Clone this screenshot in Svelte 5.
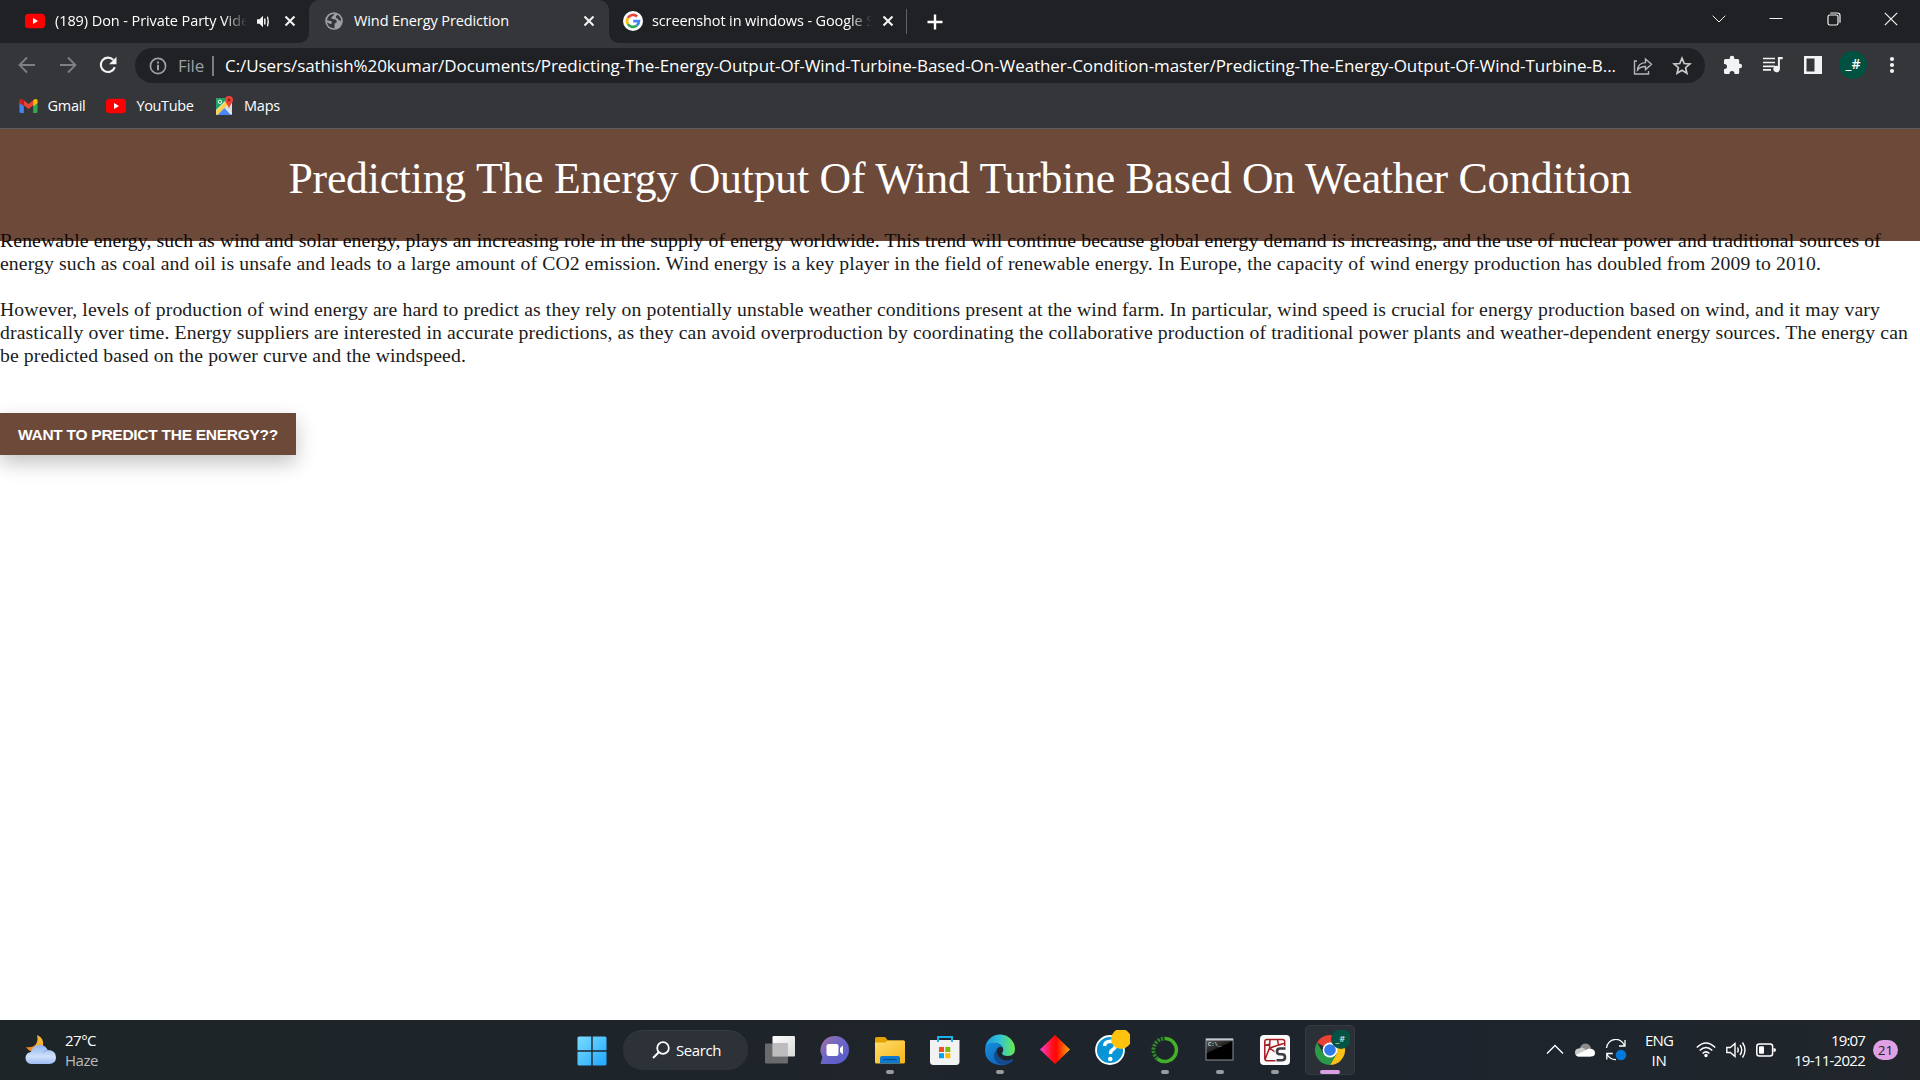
<script>
  // Spreads the letters of a label so that it takes up exactly the given width.
  function fit(node, width) {
    const count = node.textContent.length;
    const natural = node.getBoundingClientRect().width;
    node.style.letterSpacing = `${(width - natural) / count}px`;
  }

  const apps = ['taskview', 'chat', 'folder', 'store', 'edge', 'diamond', 'help', 'ring', 'cmd', 'spyder', 'chrome'];
  const running = ['folder', 'edge', 'ring', 'cmd', 'spyder'];
</script>

{#snippet youtube()}
  <svg width="20" height="20" viewBox="0 0 20 20"><rect x="0" y="2.7" width="20" height="14.6" rx="3.6" fill="#f00" /><path d="M8 7l5 3-5 3z" fill="#fff" /></svg>
{/snippet}

{#snippet cross()}
  <svg class="cross" width="12" height="12" viewBox="0 0 12 12"><path d="M1.5 1.5l9 9M10.500 1.500l-9 9" stroke="#f1f3f4" stroke-width="2.100" /></svg>
{/snippet}

<div class="screen">
  <div class="tabs">
    <div class="tab first">
      {@render youtube()}
      <div class="label faded l1"><span use:fit={194}>(189) Don - Private Party Vide</span></div>
      <svg class="audio" width="13" height="13" viewBox="0 0 13 13"><path d="M0 4.200h2.500L6 .8v11.400L2.500 8.800H0z" fill="#f1f3f4" /><path d="M7.800 3.500v6" stroke="#f1f3f4" stroke-width="1.500" /><path d="M10.500 1.600q1.500 4.900 0 9.800" fill="none" stroke="#f1f3f4" stroke-width="1.300" /></svg>
      {@render cross()}
    </div>
    <div class="tab active">
      <svg width="18" height="18" viewBox="0 0 18 18"><circle cx="9" cy="9" r="8.800" fill="#9aa0a6" /><path d="M9.200 1.800Q8.800 3.900 7.300 4.600 5.800 5.400 6.600 6.600 7.200 7.300 9.500 7.200 11.600 7.600 11.800 9.500 11.700 11 9.700 11.400 9.300 13.300 9.700 16.200Q3.200 16.400 1.900 10.300L5.300 11.900Q6.900 12.100 6.900 10.300 6.600 8.900 4.600 8.800L2 8.200Q2.700 2.600 9.200 1.800ZM12.300 2.700Q16 4.700 16.200 8.500 14.300 9 13.300 7.600 12.800 6.300 11 6 10.200 4.500 12.300 2.700z" fill="#35363a" /></svg>
      <div class="label l2"><span use:fit={155}>Wind Energy Prediction</span></div>
      {@render cross()}
    </div>
    <div class="tab third">
      <svg width="20" height="20" viewBox="0 0 20 20"><circle cx="10" cy="10" r="10" fill="#fff" /><g fill="none" stroke-width="2.700"><path d="M4.900 6.900A6 6 0 0 1 14.100 5.500" stroke="#ea4335" /><path d="M4.900 6.900A6 6 0 0 0 4.900 13.100" stroke="#fbbc05" /><path d="M4.900 13.100A6 6 0 0 0 13.900 14.500" stroke="#34a853" /><path d="M13.900 14.500Q16 12.700 16 10.100H10.200" stroke="#4285f4" /></g></svg>
      <div class="label faded l3"><span use:fit={222}>screenshot in windows - Google S</span></div>
      {@render cross()}
    </div>
    <div class="tabline"></div>
    <svg class="plus" width="16" height="16" viewBox="0 0 16 16"><path d="M8 .500v15M.500 8h15" stroke="#fff" stroke-width="2.400" /></svg>
    <div class="winctl">
      <svg width="14" height="14" viewBox="0 0 14 14"><path d="M.7 3.700L7 10l6.300-6.300" stroke-width="1" /></svg>
      <svg width="14" height="14" viewBox="0 0 14 14"><path d="M.500 6.500h13" stroke-width="1" /></svg>
      <svg width="14" height="14" viewBox="0 0 14 14"><rect x="1" y="3" width="10" height="10" rx="1.800" /><path d="M3.300 1h7a2.700 2.700 0 0 1 2.700 2.700v7" /></svg>
      <svg width="14" height="14" viewBox="0 0 14 14"><path d="M.800.800l12.400 12.400M13.200.800L.800 13.200" /></svg>
    </div>
  </div>

  <div class="toolbar">
    <div class="nav">
      <svg width="20" height="20" viewBox="0 0 20 20"><path d="M18 10H3M10 2.500L2.500 10l7.500 7.500" fill="none" stroke="#7d8084" stroke-width="1.800" /></svg>
      <svg width="20" height="20" viewBox="0 0 20 20"><path d="M2 10h15M10 2.500l7.500 7.500-7.500 7.500" fill="none" stroke="#7d8084" stroke-width="1.800" /></svg>
      <svg width="20" height="20" viewBox="0 0 20 20"><path d="M15.300 4.900A7.200 7.200 0 1 0 16.800 12.200" fill="none" stroke="#f1f3f4" stroke-width="2.100" /><path d="M18.500 1.800v7.500H11z" fill="#f1f3f4" /></svg>
    </div>
    <div class="omnibox">
      <svg width="18" height="18" viewBox="0 0 18 18"><circle cx="9" cy="9" r="7.600" fill="none" stroke="#9aa0a6" stroke-width="1.700" /><path d="M9 7.800v5.400M9 4.600v1.900" stroke="#9aa0a6" stroke-width="2" /></svg>
      <div class="file"><span use:fit={26}>File</span></div>
      <i></i>
      <div class="url"><span use:fit={1391}>C:/Users/sathish%20kumar/Documents/Predicting-The-Energy-Output-Of-Wind-Turbine-Based-On-Weather-Condition-master/Predicting-The-Energy-Output-Of-Wind-Turbine-B...</span></div>
      <svg width="20" height="20" viewBox="0 0 20 20"><path d="M4 5H1.500v13h14v-3M4.500 14Q5 7 12.500 6.600V3L18.500 8.300 12.500 13.600V10.500Q7.500 10.400 4.500 14z" fill="none" stroke="#b4b7ba" stroke-width="1.400" /></svg>
      <svg class="star" width="20" height="20" viewBox="0 0 20 20"><path d="M10 2.200l2.200 5.300 5.700.5-4.300 3.700 1.300 5.600L10 14.300l-4.900 3 1.300-5.600L2.100 8l5.700-.5z" fill="none" stroke="#c8cacc" stroke-width="1.700" /></svg>
    </div>
    <div class="tools">
      <svg width="20" height="20" viewBox="0 0 20 20"><path d="M1 5.500Q1 4 2.500 4H6.700V3a2.300 2.300 0 0 1 4.600 0v1h3.400q1.500 0 1.500 1.500v3.200h.6a2.300 2.300 0 0 1 0 4.600h-.6v4.200q0 1.500-1.500 1.500h-3.200v-.6a2.500 2.500 0 0 0-5 0v.6H2.500Q1 19 1 17.500v-3.400h.5a2.500 2.500 0 0 0 0-5H1z" fill="#f1f3f4" /></svg>
      <svg width="20" height="20" viewBox="0 0 20 20"><path d="M0 3.500h12M0 7.500h12M0 11.300h12M0 14.800h8" stroke="#f1f3f4" stroke-width="1.700" /><path d="M14.900 2h4.800v2.300H16.900V14a3.300 3.300 0 1 1-2-3z" fill="#f1f3f4" /></svg>
      <svg width="20" height="20" viewBox="0 0 20 20"><path d="M1 1h18v18H1zM3.500 3.500v13h8v-13z" fill="#f1f3f4" fill-rule="evenodd" /></svg>
      <div class="avatar">_#</div>
      <svg width="20" height="20" viewBox="0 0 20 20"><circle cx="10" cy="4" r="2.100" fill="#f1f3f4" /><circle cx="10" cy="10" r="2.100" fill="#f1f3f4" /><circle cx="10" cy="16" r="2.100" fill="#f1f3f4" /></svg>
    </div>
  </div>

  <div class="bookmarks">
    <div class="mark m1">
      <svg width="19" height="16" viewBox="0 0 19 16"><path d="M.500 3v10.500q0 1.500 1.500 1.500h2.800V6.500z" fill="#4285f4" /><path d="M18.500 3v10.500q0 1.500-1.500 1.500h-2.800V6.500z" fill="#34a853" /><path d="M4.800 2.200l4.700 3.700 4.700-3.700v5L9.500 10.900 4.800 7.200z" fill="#ea4335" /><path d="M14.200 2.200Q17-.2 18.500 2v3l-4.300 3.200z" fill="#fbbc04" /><path d="M4.800 2.200Q2-.2.500 2v3l4.300 3.200z" fill="#c5221f" /></svg>
      <span use:fit={38}>Gmail</span>
    </div>
    <div class="mark m2">{@render youtube()}<span use:fit={57}>YouTube</span></div>
    <div class="mark m3">
      <svg width="19" height="22" viewBox="0 0 19 22"><rect x="1" y="3" width="16" height="17" rx="1.500" fill="#e8eaed" /><path d="M1 4.500Q1 3 2.500 3H13L1 15z" fill="#1ea362" /><path d="M1 16L14 3l3 3L2.500 20Q1 20 1 18.500z" fill="#fbd24c" /><path d="M2.500 20l7-7 6.500 7z" fill="#4a89f3" /><path d="M10 12.500L14 9l3 3v6z" fill="#dadce0" /><path d="M14 1a4 4 0 0 1 4 4q0 2.500-2.200 4.800Q14.500 11.300 14 13.500 13.500 11.300 12.200 9.800 10 7.500 10 5a4 4 0 0 1 4-4z" fill="#ea4335" /><circle cx="14" cy="5" r="1.400" fill="#8c1f17" /><circle cx="4.900" cy="6.800" r="1.700" fill="none" stroke="#fff" /></svg>
      <span use:fit={36}>Maps</span>
    </div>
  </div>

  <main>
    <header><h1><span use:fit={1343}>Predicting The Energy Output Of Wind Turbine Based On Weather Condition</span></h1></header>
    <section>
      <p>
        <span use:fit={1881}>Renewable energy, such as wind and solar energy, plays an increasing role in the supply of energy worldwide. This trend will continue because global energy demand is increasing, and the use of nuclear power and traditional sources of</span>
        <span use:fit={1821}>energy such as coal and oil is unsafe and leads to a large amount of CO2 emission. Wind energy is a key player in the field of renewable energy. In Europe, the capacity of wind energy production has doubled from 2009 to 2010.</span>
      </p>
      <p>
        <span use:fit={1880}>However, levels of production of wind energy are hard to predict as they rely on potentially unstable weather conditions present at the wind farm. In particular, wind speed is crucial for energy production based on wind, and it may vary</span>
        <span use:fit={1908}>drastically over time. Energy suppliers are interested in accurate predictions, as they can avoid overproduction by coordinating the collaborative production of traditional power plants and weather-dependent energy sources. The energy can</span>
        <span use:fit={466}>be predicted based on the power curve and the windspeed.</span>
      </p>
    </section>
    <button><span use:fit={260}>WANT TO PREDICT THE ENERGY??</span></button>
  </main>

  <div class="taskbar">
    <div class="weather">
      <svg width="32" height="32" viewBox="0 0 32 32">
        <defs><linearGradient id="moon" x1="0" y1="1" x2="1" y2="0"><stop offset="0" stop-color="#f07a1a" /><stop offset="1" stop-color="#f8c93a" /></linearGradient><linearGradient id="cloud" x1="0" y1="0" x2="0" y2="1"><stop offset="0" stop-color="#8fb3ee" /><stop offset=".6" stop-color="#cfe0fb" /><stop offset="1" stop-color="#9dbdf2" /></linearGradient></defs>
        <path d="M12 1Q19 4 18 11 17 17 10 18 4 18 1 13q7 1 10-3 2.500-4 1-9z" fill="url(#moon)" />
        <path d="M6 30a5.500 6 0 0 1 0-12Q8 11 15 11q5.500 0 7.500 5Q31 16 31 23.500 31 30 24 30z" fill="url(#cloud)" />
        <path d="M18 19q2-3 5-3" fill="none" stroke="#7ca5e8" />
      </svg>
      <div class="stack"><span use:fit={31}>27°C</span><span class="dim" use:fit={33}>Haze</span></div>
    </div>

    <div class="center">
      <svg class="start" width="30" height="30" viewBox="0 0 30 30"><defs><linearGradient id="win" x1="0" y1="0" x2="1" y2="1" gradientUnits="objectBoundingBox"><stop offset="0" stop-color="#7bdcff" /><stop offset="1" stop-color="#1fa7ff" /></linearGradient></defs><path d="M2 .500h12.300v13.800H.500V2Q.500.500 2 .500zM15.700.500H28q1.500 0 1.500 1.500v12.300H15.700zM.500 15.700h13.800v13.800H2Q.500 29.500.500 28zM15.700 15.700h13.800V28q0 1.500-1.500 1.500H15.700z" fill="url(#win)" /></svg>
      <div class="search">
        <svg width="18" height="18" viewBox="0 0 18 18"><circle cx="11" cy="7" r="5.800" fill="none" stroke="#fff" stroke-width="1.800" /><path d="M6.800 11.200L1 17" stroke="#fff" stroke-width="2" /></svg>
        <span use:fit={45}>Search</span>
      </div>
      <div class="apps">
        {#each apps as app}
          <div class="app" class:current={app === 'chrome'}>
            <svg width="40" height="40" viewBox="0 0 40 40">
              {#if app === 'taskview'}
                <defs><linearGradient id="tv" x1="0" y1="0" x2="1" y2="1"><stop offset="0" stop-color="#fff" /><stop offset="1" stop-color="#d8d8d8" /></linearGradient></defs>
                <rect x="12.500" y="6" width="22.500" height="20.500" rx="1.200" fill="url(#tv)" /><rect x="5" y="13.500" width="23" height="20" rx="1.200" fill="#777" fill-opacity=".85" /><rect x="12.500" y="13.500" width="15.500" height="13" fill="#bdbdbd" />
              {:else if app === 'chat'}
                <defs><linearGradient id="ch" x1="0" y1="0" x2="1" y2="1"><stop offset="0" stop-color="#a5709f" /><stop offset=".45" stop-color="#6e68c4" /><stop offset="1" stop-color="#5356cf" /></linearGradient></defs>
                <path d="M20 6a14 14 0 0 1 0 28H5.500L7.400 27A14 14 0 0 1 20 6z" fill="url(#ch)" /><rect x="11.500" y="14" width="12" height="12" rx="2.200" fill="#fff" /><path d="M25 18l3-2.500v9L25 22z" fill="#fff" />
              {:else if app === 'folder'}
                <defs><linearGradient id="fo" x1="0" y1="0" x2="1" y2="1"><stop offset="0" stop-color="#ffdd6a" /><stop offset="1" stop-color="#f6b51a" /></linearGradient></defs>
                <path d="M5 8.500Q5 7 6.500 7H15l3 3.500h15.500Q35 10.500 35 12v6H5z" fill="#e5a100" /><path d="M5 12.500h10l3-2h15.500q1.500 0 1.500 1.500V32q0 1.500-1.500 1.500h-27Q5 33.500 5 32z" fill="url(#fo)" /><path d="M10 33.500V28q0-2 2-2h16q2 0 2 2v5.500z" fill="#0f78cf" /><path d="M13.500 29.500h13" stroke="#064e93" stroke-width="1.200" />
              {:else if app === 'store'}
                <path d="M5 10h29.500v21.500Q34.500 35 31 35H8.500Q5 35 5 31.500z" fill="#f2f2f2" /><path d="M13 12V7h14v5" fill="none" stroke="#1ab0f0" stroke-width="2" /><path d="M14 17h5v5h-5z" fill="#f25022" /><path d="M20.300 17h5v5h-5z" fill="#7fba00" /><path d="M14 23.200h5v5h-5z" fill="#00a4ef" /><path d="M20.300 23.200h5v5h-5z" fill="#ffb900" />
              {:else if app === 'edge'}
                <defs><linearGradient id="e1"><stop offset="0" stop-color="#2296e3" /><stop offset=".5" stop-color="#32c4d2" /><stop offset="1" stop-color="#6bea50" /></linearGradient><linearGradient id="e2" x1="0" y1="0" x2="1" y2="1"><stop offset="0" stop-color="#1590df" /><stop offset="1" stop-color="#0b55ad" /></linearGradient></defs>
                <path d="M5.200 17A15 15 0 0 1 35 19Q35 25.500 28 26 22 26 22 23q2-2 1-5-3-6-10-4.500Q8 14 5.200 17z" fill="url(#e1)" /><path d="M5 20Q5 13 13 12.800 21 13 23.300 18 20 15.500 17.300 18.500 14 24 18.500 29 24 33.500 31 30.300 34 29 32.500 31 27.500 36 19 35 5 32.500 5 20z" fill="url(#e2)" /><path d="M16.300 20Q12 25 15.500 30.500 18.500 34.700 23.500 34.800 29.500 34 33 30q.5-1.500-1-.8-7 3.500-12.500-1.700-3-3.500-3.200-7.500z" fill="#134b8e" />
              {:else if app === 'diamond'}
                <defs><linearGradient id="di"><stop offset="0" stop-color="#ff3fd5" /><stop offset=".4" stop-color="#ff1020" /><stop offset=".55" stop-color="#ff0800" /><stop offset="1" stop-color="#ffad10" /></linearGradient></defs><path d="M20 5l15 14.500L20 34 5 19.500z" fill="url(#di)" />
              {:else if app === 'help'}
                <circle cx="20" cy="20" r="14" fill="#0895d8" stroke="#fff" stroke-width="1.800" /><path d="M14.500 16q.5-4.800 6-4.800 5 .3 5 4.300 0 2.500-3 4.200-2 1.300-2 4.300" fill="none" stroke="#fff" stroke-width="3.400" /><circle cx="20.300" cy="29" r="2.300" fill="#fff" /><circle cx="31" cy="9" r="10" fill="#ffc20e" />
              {:else if app === 'ring'}
                <path d="M20 8.500a11.500 11.500 0 1 1-7.500 20.300" fill="none" stroke="#43b02a" stroke-width="3.600" /><path d="M12.500 28.800A11.500 11.500 0 0 1 20 8.500" fill="none" stroke="#2f8a27" stroke-width="3.800" stroke-dasharray="2.200 1.200" />
              {:else if app === 'cmd'}
                <defs><linearGradient id="cm" x1="0" y1="0" x2=".6" y2="1"><stop offset="0" stop-color="#5a5a5a" /><stop offset=".5" stop-color="#222" /><stop offset=".52" stop-color="#000" /></linearGradient></defs>
                <rect x="6" y="9" width="27" height="21" fill="url(#cm)" stroke="#8a9099" /><path d="M6 9.500h27" stroke="#c4c9d0" stroke-width="2" /><text x="8" y="16.200" font-size="5.500" font-family="Liberation Mono" fill="#fff">C:\_</text>
              {:else if app === 'spyder'}
                <rect x="5" y="5" width="30" height="30" rx="4" fill="#fafafa" /><path d="M20.500 30.800H12q-2.200 0-2.200-2.200V11.700q0-2.200 2.200-2.200h15.500q2.200 0 2.200 2.200V17M15 9.500l-.5 8.500L9.800 30M14.500 18L30 13M14.500 18l7 5M10 15.500l5-1.500M22.500 9.700l1 5.500" fill="none" stroke="#a71c22" stroke-width="1.500" /><path d="M30.500 18.500H25q-3 0-3 3 0 2.800 3 2.800h2q3 0 3 3 0 3-3 3h-5.500" fill="none" stroke="#fafafa" stroke-width="5" /><path d="M30.500 18.500H25q-3 0-3 3 0 2.800 3 2.800h2q3 0 3 3 0 3-3 3h-5.500" fill="none" stroke="#3c3d40" stroke-width="2.600" />
              {:else}
                <path d="M20 20L7 12.500A15 15 0 0 1 33 12.500H20z" fill="#ea4335" /><path d="M20 12.500h13A15 15 0 0 1 20 35l6.500-11.300z" fill="#fbc116" /><path d="M7 12.500A15 15 0 0 0 20 35l6.500-11.300L13.500 23.800z" fill="#2b9a48" /><circle cx="20" cy="20" r="7.400" fill="#fff" /><circle cx="20" cy="20" r="5.800" fill="#3079ed" /><circle cx="31" cy="9" r="10" fill="#045344" /><text x="25.500" y="12" font-size="9" font-family="Open Sans" font-weight="600" fill="#d5e4e0">_#</text>
              {/if}
            </svg>
            {#if running.includes(app) || app === 'chrome'}<b></b>{/if}
          </div>
        {/each}
      </div>
    </div>

    <div class="tray">
      <svg width="20" height="20" viewBox="0 0 20 20"><path d="M2 13.500l8-8 8 8" fill="none" stroke="#fff" stroke-width="1.400" /></svg>
      <svg width="20" height="20" viewBox="0 0 20 20"><path d="M4.500 9Q6 3.500 10.500 3.500q4 0 5.500 4.500L10 13z" fill="#8c8c8c" /><path d="M4 16.500a4 4 0 0 1 0-8q3-1.500 6 .5l6 7.500z" fill="#c9c9c9" /><path d="M1 15l10-5q3-2.500 6-1 3 1 3 4 0 3.500-4 3.500H4Q2 16.500 1 15z" fill="#fff" /></svg>
      <svg width="22" height="22" viewBox="0 0 22 22"><path d="M1.500 9A9.300 9.300 0 0 1 19.500 6.500M20 1v6h-6M1.800 20.500v-6h6M2 15.500q3.500 5.500 9 5" fill="none" stroke="#fff" stroke-width="1.300" /><circle cx="16" cy="16" r="5.300" fill="#0078d9" /></svg>
      <div class="stack lang"><span use:fit={28}>ENG</span><span use:fit={15}>IN</span></div>
      <svg width="20" height="20" viewBox="0 0 20 20"><g fill="none" stroke="#fff" stroke-width="1.500"><path d="M.8 7.500Q10-1.500 19.200 7.500M3.700 10.500q6.300-6 12.600 0M6.600 13.500q3.400-3.300 6.800 0" /></g><circle cx="10" cy="15.500" r="1.700" fill="#fff" /></svg>
      <svg width="20" height="20" viewBox="0 0 20 20"><g fill="none" stroke="#fff" stroke-width="1.400"><path d="M.8 7.500h3.500L9 3.500v13l-4.700-4H.8z" /><path d="M11.500 7.500q1.500 2.500 0 5M14 5q3.500 5 0 10M16.500 2.500q5 7.500 0 15" /></g></svg>
      <svg width="20" height="20" viewBox="0 0 20 20"><rect x=".8" y="4" width="15.800" height="12" rx="2.500" fill="none" stroke="#fff" stroke-width="1.500" /><rect x="3" y="6.200" width="5" height="7.600" rx="1" fill="#fff" /><path d="M17.500 8q2.500 0 2.500 2t-2.500 2z" fill="#fff" /></svg>
      <div class="stack clock"><span use:fit={34}>19:07</span><span use:fit={71}>19-11-2022</span></div>
      <div class="badge">21</div>
    </div>
  </div>
</div>

<style>
  :global(body) { margin: 0; overflow: hidden; background: #fff; }
  svg { display: block; flex: none; }
  span { white-space: pre; flex: none; }
  .screen { width: 1920px; height: 1080px; display: flex; flex-direction: column; font: 14.5px/20px "Open Sans", "Noto Sans", sans-serif; color: #fff; overflow: hidden; }

  .tabs { height: 43px; flex: none; display: flex; align-items: center; background: linear-gradient(#202124, #202124) 0 0 / 100% 22px no-repeat, linear-gradient(#202124, #202124) 620px 0 / 100% 43px no-repeat, #35363a; }
  .tab { height: 43px; display: flex; align-items: center; box-sizing: border-box; flex: none; padding-bottom: 1px; }
  .first { width: 309px; padding-left: 25px; border-radius: 0 0 10px 0; background: #202124; }
  .active { width: 300px; padding-left: 16px; background: #35363a; border-radius: 10px 10px 0 0; }
  .third { width: 297px; padding-left: 14px; border-radius: 0 0 0 10px; background: #202124; }
  .label { display: flex; flex: none; }
  .l1 { width: 193px; margin-left: 10px; }
  .l2 { width: 229px; margin-left: 11px; }
  .l3 { width: 221px; margin-left: 9px; }
  .faded { mask-image: linear-gradient(90deg, #000 calc(100% - 24px), transparent calc(100% - 1px)); }
  .audio { margin: 0 14px 0 9px; }
  .third .cross { margin-left: 9px; }
  .tabline { width: 1px; height: 25px; background: #5f6368; }
  .plus { margin-left: 20px; }
  .winctl { display: flex; gap: 43.300px; margin: -5px 22px 0 auto; fill: none; stroke: #f2f2f2; stroke-width: 1.200; }

  .toolbar { height: 44px; flex: none; background: #35363a; display: flex; align-items: center; }
  .nav { display: flex; gap: 20.500px; margin-left: 17px; width: 118px; }
  .omnibox { width: 1570px; height: 35px; margin-top: 1px; border-radius: 18px; background: #202124; display: flex; align-items: center; box-sizing: border-box; padding-left: 13.500px; font-size: 17px; line-height: 24px; flex: none; }
  .file { width: 33.500px; margin-left: 11.500px; color: #9aa0a6; display: flex; }
  .omnibox i { width: 2px; height: 20px; background: #7b7e82; }
  .url { width: 1407.500px; margin-left: 11.500px; display: flex; flex: none; }
  .star { margin-left: 19.500px; }
  .tools { display: flex; align-items: center; margin-left: 18px; gap: 20px; }
  .avatar { width: 28px; height: 28px; border-radius: 50%; background: #00513f; margin: 0 -4px; text-align: center; font-size: 14px; line-height: 26px; font-weight: 600; }
  .tools > :last-child { margin-left: -1px; }

  .bookmarks { height: 42px; flex: none; background: #35363a; border-bottom: 1px solid #5b5e62; display: flex; align-items: center; box-sizing: border-box; padding-bottom: 3px; }
  .mark { display: flex; align-items: center; flex: none; }
  .m1 { margin-left: 18.500px; gap: 10px; width: 87.500px; }
  .m2 { gap: 10.500px; width: 109px; }
  .m3 { gap: 10px; }

  main { height: 891px; flex: none; background: #fff; font-family: "Liberation Serif", serif; color: #000; overflow: hidden; }
  header { height: 112px; background: #6d493a; color: #fff; }
  h1 { margin: 0; padding-top: 24px; font-size: 43.750px; font-weight: 400; line-height: 50px; display: flex; justify-content: center; }
  section { margin-top: -12px; position: relative; font-size: 19.700px; line-height: 23px; color: #1b1b1b; }
  p { margin: 0 0 23px; display: flex; flex-direction: column; align-items: flex-start; }
  p:first-child span:first-child { color: #0c0908; }
  button { display: flex; align-items: center; width: 296px; height: 42px; margin-top: 46px; padding: 2px 0 0 18px; border: 0; background: #6d493a; color: #fff; font: bold 15.500px/20px "Liberation Sans", sans-serif; box-shadow: 0 8px 20px rgba(0, 0, 0, .24); }

  .taskbar { height: 60px; flex: none; background: linear-gradient(90deg, #1e2528, #1e242b 60%, #1d242d 75%, #20262a); display: flex; font-size: 15px; }
  .stack { display: flex; flex-direction: column; align-items: flex-start; line-height: 20px; }
  .weather { display: flex; align-items: center; width: 551.500px; padding-left: 25px; gap: 8px; flex: none; }
  .dim { color: #b9bcbe; }
  .center { display: flex; align-items: center; flex: none; margin-right: -1px; }
  .start { margin-bottom: -1px; }
  .search { width: 125px; height: 40px; border-radius: 20px; background: #2c3238; box-shadow: inset 0 1px #363c41; margin: 0 4px 0 16.500px; display: flex; align-items: center; padding-left: 29px; gap: 6px; box-sizing: border-box; }
  .apps { display: flex; }
  .app { width: 55px; height: 50px; display: flex; align-items: center; flex-direction: column; padding-top: 5px; box-sizing: border-box; }
  .app b { width: 8px; height: 4px; border-radius: 2px; background: #999b9d; }
  .current { width: 50px; margin-left: 2.500px; border-radius: 5px; background: #2b3037; box-shadow: inset 0 0 0 1px #353a41; }
  .current b { width: 20px; background: #d99fe3; }
  .tray { display: flex; align-items: center; margin-left: auto; gap: 10px; padding-right: 22px; }
  .lang { width: 28px; align-items: center; margin: 0 13px 0 8px; }
  .clock { width: 71px; align-items: flex-end; margin-left: 8px; }
  .badge { width: 25px; height: 20px; border-radius: 10px; background: #dfa0e6; color: #222; text-align: center; font-size: 13.500px; line-height: 20px; margin-left: -2px; }
</style>
